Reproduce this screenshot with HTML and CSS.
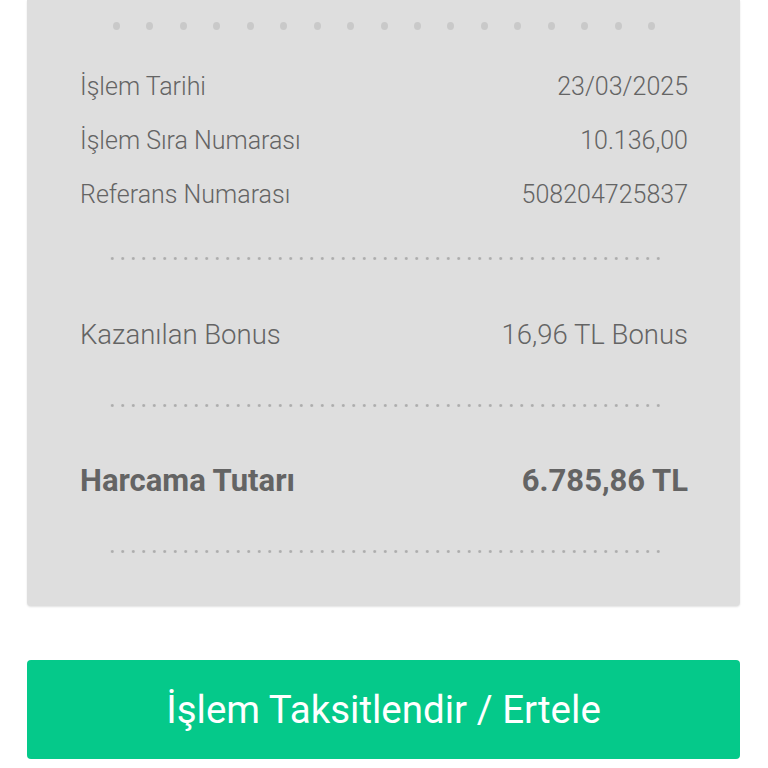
FILE: index.html
```html
<!DOCTYPE html>
<html lang="tr">
<head>
    <meta charset="UTF-8">
    <meta name="viewport" content="width=device-width, initial-scale=1.0">
    <title>İşlem Detayı</title>
    <link rel="stylesheet" href="styles.css">
</head>
<body>
    <div class="receipt">
        <div class="perf">
            <span></span><span></span><span></span><span></span><span></span><span></span>
            <span></span><span></span><span></span><span></span><span></span><span></span>
            <span></span><span></span><span></span><span></span><span></span>
        </div>

        <div class="rows">
            <div class="row"><span>İşlem Tarihi</span><span>23/03/2025</span></div>
            <div class="row"><span>İşlem Sıra Numarası</span><span>10.136,00</span></div>
            <div class="row"><span>Referans Numarası</span><span>508204725837</span></div>
        </div>
        <div class="dots dots-first"></div>

        <div class="row row-bonus"><span>Kazanılan Bonus</span><span>16,96 TL Bonus</span></div>
        <div class="dots"></div>

        <div class="row row-total"><span>Harcama Tutarı</span><span>6.785,86 TL</span></div>
        <div class="dots"></div>
    </div>

    <button class="btn-main">İşlem Taksitlendir / Ertele</button>
</body>
</html>
```

FILE: styles.css
```css
:root {
    --card-bg: #dedede;
    --text-color: #646464;
    --green: #05c98a;
}

body {
    margin: 0;
    background: #ffffff;
    font-family: Roboto, "Noto Sans", Arial, sans-serif;
}

.receipt {
    margin: 0 28px 0 27px;
    padding: 22px 52px 53px 53px;
    background: var(--card-bg);
    border-radius: 0 0 4px 4px;
    box-shadow: 0 1px 2px rgba(0,0,0,0.12);
}

.perf {
    display: flex;
    justify-content: space-between;
    margin: 0 33px 30px 33px;
    height: 7px;
}

.perf span {
    width: 7px;
    height: 8px;
    border-radius: 50%;
    background: #c9c9c9;
}

.row {
    display: flex;
    justify-content: space-between;
    align-items: center;
    height: 54px;
    font-size: 25px;
    font-weight: 300;
    color: var(--text-color);
}

.dots {
    height: 3px;
    margin: 43px 27px 0 27px;
    background-image: radial-gradient(circle, #adadad 1.2px, transparent 1.6px);
    background-size: 10.5px 3px;
    background-repeat: repeat-x;
}

.dots-first {
    margin-top: 36px;
}

.row-bonus {
    margin-top: 47px;
    font-size: 27.5px;
}

.row-total {
    margin-top: 46px;
    font-size: 31px;
    font-weight: bold;
}

.btn-main {
    display: block;
    width: 713px;
    height: 99px;
    margin: 54px 0 0 27px;
    border: none;
    border-radius: 4px;
    background: var(--green);
    color: #ffffff;
    font-family: Roboto, "Noto Sans", Arial, sans-serif;
    font-size: 38.5px;
    cursor: pointer;
}
```
